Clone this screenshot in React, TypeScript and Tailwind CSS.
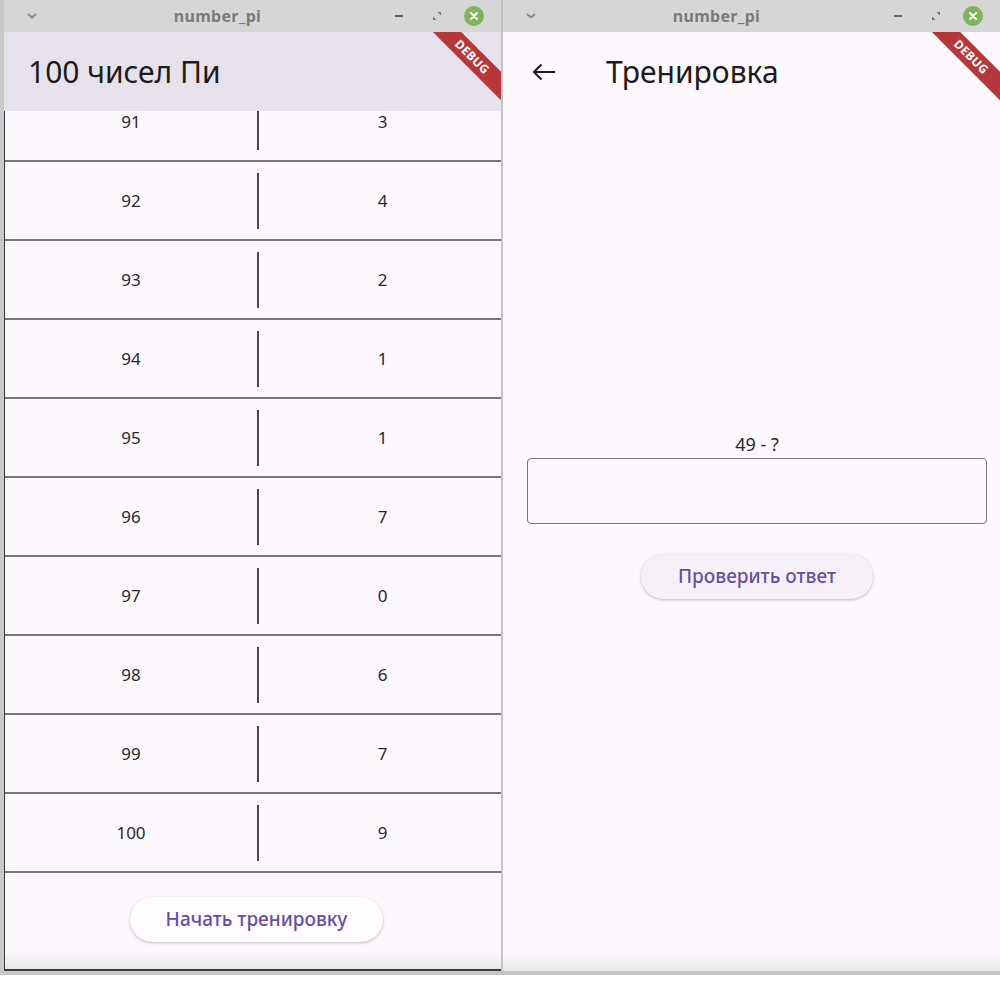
import React from 'react';

const digits: [number, number][] = [
  [91, 3], [92, 4], [93, 2], [94, 1], [95, 1], [96, 7], [97, 0], [98, 6], [99, 7], [100, 9],
];

function TitleBar() {
  return (
    <div className="h-[32px] flex items-center bg-[#d6d6d6] text-[#7b7b7b]">
      <div className="w-[50px] flex justify-center pl-[6px]">
        <svg width="10" height="6" viewBox="0 0 10 6">
          <path d="M1 1 L5 4.5 L9 1" stroke="#8a8a8a" strokeWidth="1.8" fill="none" />
        </svg>
      </div>
      <div className="flex-1 text-center text-[16px] font-bold tracking-[0.3px] pr-[4px]">number_pi</div>
      <div className="w-[116px] flex items-center">
        <div className="w-[8px] h-[2px] bg-[#666] ml-[10px]" />
        <svg className="ml-[30px]" width="8" height="8" viewBox="0 0 8 8">
          <path d="M8 0 L8 3.5 L4.5 0 Z M0 8 L0 4.5 L3.5 8 Z" fill="#777" />
        </svg>
        <div className="ml-[23px] w-[20px] h-[20px] rounded-full bg-[#82b45b] flex items-center justify-center">
          <svg width="10" height="10" viewBox="0 0 10 10">
            <path d="M2 2 L8 8 M8 2 L2 8" stroke="#fff" strokeWidth="2" strokeLinecap="round" />
          </svg>
        </div>
      </div>
    </div>
  );
}

function DebugBanner() {
  return (
    <div className="pointer-events-none absolute top-[15px] right-[-46px] w-[150px] h-[20px] rotate-45 bg-[#b5373a] flex items-center justify-center text-white text-[12px] font-bold tracking-[0.3px]">
      DEBUG
    </div>
  );
}

function BottomShade() {
  return (
    <div className="pointer-events-none absolute left-0 right-0 bottom-0 h-[18px] bg-gradient-to-b from-[#fdf8fe]/0 to-[#ebe6ec]" />
  );
}

function ListWindow() {
  return (
    <div className="w-[501px] flex flex-col border-l-4 border-[#c9c9c9]">
      <TitleBar />
      <div className="relative h-[939px] overflow-hidden bg-[#fdf8fe] flex flex-col">
        <div className="h-[79px] bg-[#e7e1ec] flex items-center pl-[24px] text-[30px] text-[#1d1b20] shrink-0">
          100 чисел Пи
        </div>
        <div className="h-[762px] overflow-hidden border-l border-[#3b3b3b]">
          <div className="mt-[-28px]">
            {digits.map(([n, d]) => (
              <div key={n} className="h-[79px] flex items-center border-b-2 border-[#7a757f] text-[17px] text-[#2a2730]">
                <div className="w-[252px] text-center">{n}</div>
                <div className="w-[2px] h-[56px] bg-[#4a4550]" />
                <div className="flex-1 text-center pl-[5px]">{d}</div>
              </div>
            ))}
          </div>
        </div>
        <div className="relative h-[98px] flex items-center justify-center border-l border-b-2 border-[#3b3b3b]">
          <BottomShade />
          <button className="relative h-[45px] w-[253px] mb-[4px] ml-[7px] rounded-full bg-[#fffbff] shadow-[0_1px_3px_rgba(0,0,0,0.25)] text-[19px] font-medium text-[#6550a0]">
            Начать тренировку
          </button>
        </div>
        <DebugBanner />
      </div>
      <div className="h-[4px] bg-[#c6c6c6]" />
    </div>
  );
}

function TrainingWindow() {
  return (
    <div className="flex-1 flex flex-col">
      <TitleBar />
      <div className="relative h-[939px] overflow-hidden bg-[#fdf8fe] flex flex-col">
        <div className="h-[79px] flex items-center shrink-0 text-[#1d1b20]">
          <svg className="ml-[29px]" width="24" height="18" viewBox="0 0 24 18">
            <path d="M23 9H2 M9.5 1.5 L2 9 L9.5 16.5" stroke="#1d1b20" strokeWidth="2" fill="none" />
          </svg>
          <div className="ml-[50px] text-[30px]">Тренировка</div>
        </div>
        <div className="ml-[24px] w-[460px] pt-[321px] flex flex-col items-center">
          <div className="h-[24px] leading-[24px] text-[18px] text-[#2a2730]">49 - ?</div>
          <div className="mt-[2px] w-full h-[66px] rounded-[4px] border border-[#7a757f] bg-transparent" />
          <button className="mt-[30px] h-[45px] w-[232px] rounded-full bg-[#f6f0f8] shadow-[0_1px_3px_rgba(0,0,0,0.25)] text-[19px] font-medium text-[#6550a0]">
            Проверить ответ
          </button>
        </div>
        <BottomShade />
        <DebugBanner />
      </div>
      <div className="h-[4px] bg-[#c6c6c6]" />
    </div>
  );
}

export default function App() {
  return (
    <div className="w-[1000px] h-[1000px] bg-white flex items-start" style={{ fontFamily: '"Noto Sans", "DejaVu Sans", sans-serif' }}>
      <ListWindow />
      <div className="w-[2px] h-[975px] bg-[#c4c4c4]" />
      <TrainingWindow />
    </div>
  );
}
